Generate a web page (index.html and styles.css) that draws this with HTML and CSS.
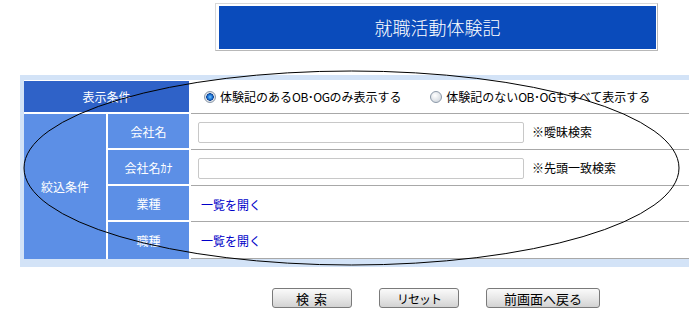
FILE: index.html
```html
<!DOCTYPE html>
<html lang="ja">
<head>
  <meta charset="UTF-8">
  <title>就職活動体験記</title>
  <link rel="stylesheet" href="styles.css">
</head>
<body>
  <div class="page-title">
    <h1>就職活動体験記</h1>
  </div>

  <div class="search-panel">
    <table class="search-table">
      <tr class="row-head">
        <th class="label label-dark" colspan="2">表示条件</th>
        <td class="field">
          <label class="radio"><input type="radio" name="disp" checked><span>体験記のある<span class="latin">OB･OG</span>のみ表示する</span></label>
          <label class="radio radio-second"><input type="radio" name="disp"><span>体験記のない<span class="latin">OB･OG</span>もすべて表示する</span></label>
        </td>
      </tr>
      <tr>
        <th class="label group" rowspan="4">絞込条件</th>
        <th class="label sub">会社名</th>
        <td class="field">
          <input type="text" class="text-box"><span class="note">※曖昧検索</span>
        </td>
      </tr>
      <tr>
        <th class="label sub">会社名ｶﾅ</th>
        <td class="field">
          <input type="text" class="text-box"><span class="note">※先頭一致検索</span>
        </td>
      </tr>
      <tr>
        <th class="label sub">業種</th>
        <td class="field"><a href="#" class="open-list">一覧を開く</a></td>
      </tr>
      <tr>
        <th class="label sub last">職種</th>
        <td class="field last"><a href="#" class="open-list">一覧を開く</a></td>
      </tr>
    </table>
  </div>

  <div class="buttons">
    <button class="btn btn-search">検 索</button>
    <button class="btn btn-reset">リセット</button>
    <button class="btn btn-back">前画面へ戻る</button>
  </div>

  <!-- hand drawn annotation over the form -->
  <svg class="annotation" width="689" height="326" viewBox="0 0 689 326">
    <ellipse cx="351.5" cy="168" rx="327.5" ry="97" fill="none" stroke="#000" stroke-width="1"/>
  </svg>
</body>
</html>
```

FILE: styles.css
```css
body {
  margin: 0;
  padding: 0;
  width: 689px;
  height: 326px;
  overflow: hidden;
  position: relative;
  background: #fff;
  font-family: "Noto Sans CJK JP", "DejaVu Sans", sans-serif;
  font-size: 12px;
  color: #000;
}

.page-title {
  margin: 3px 0 0 215px;
  width: 437px;
  height: 43px;
  padding: 2px 1px 1px 3px;
  border: 1px solid #d8d8d8;
  border-right-color: #b8b8b8;
  border-bottom-color: #b8b8b8;
  background: #fff;
}

.page-title h1 {
  margin: 0;
  height: 43px;
  background: #0a4bbb;
  color: #fff;
  font-size: 18px;
  font-weight: 300;
  line-height: 43px;
  text-align: center;
}

.search-panel {
  margin: 24px 0 0 20px;
  padding: 5px 0 8px 4px;
  width: 700px;
  background: #d3e3f7;
}

.search-table {
  border-collapse: separate;
  border-spacing: 0;
  width: 720px;
  background: #fff;
}

.label {
  color: #fff;
  font-weight: normal;
  text-align: center;
  background: #5c8fe6;
  border-right: 2px solid #fff;
  border-bottom: 2px solid #fff;
  padding: 0;
}

.label-dark {
  background: #2f62c8;
  height: 31px;
  border-top: 1px solid #fff;
  border-bottom: 2px solid #fff;
}

.group {
  width: 82px;
  border-bottom: none;
}

.sub {
  width: 81px;
  height: 34px;
}

.sub.last {
  height: 37px;
  border-bottom: none;
}

.field {
  padding: 0 0 0 7px;
  border-bottom: 1px solid #a8a8a8;
  border-top: 1px solid #fff;
}

.row-head .field {
  border-top: 1px solid #fff;
  padding-left: 13px;
}

.field.last {
  border-bottom: 1px solid #a8a8a8;
}

.radio {
  display: inline-flex;
  align-items: center;
  gap: 4px;
  white-space: nowrap;
}

.radio .latin {
  letter-spacing: -0.5px;
}

.radio-second {
  margin-left: 26px;
}

.radio input {
  appearance: none;
  margin: 0;
  width: 12px;
  height: 12px;
  border-radius: 50%;
  border: 1px solid #8b98a8;
  background: radial-gradient(circle at 40% 35%, #ffffff, #d8dde3 70%);
}

.radio input:checked {
  background: radial-gradient(circle, #6fc4ff 0, #1a6fd0 2.5px, #0b3f8f 3.5px, #e6eaee 4px, #c9d0d8 100%);
}

.text-box {
  width: 320px;
  height: 17px;
  margin: 0 8px 0 0;
  padding: 1px 2px;
  border: 1px solid #c8c8c8;
  border-radius: 2px;
  vertical-align: middle;
  font-size: 12px;
}

.note {
  vertical-align: middle;
}

.open-list {
  color: #0000c8;
  text-decoration: none;
  margin-left: 3px;
}

.buttons {
  display: flex;
  gap: 27px;
  margin: 21px 0 0 272px;
}

.btn {
  height: 20px;
  padding: 0;
  border: 1px solid #7a7a7a;
  border-radius: 3px;
  background: linear-gradient(#fafafa, #e6e6e6 55%, #d2d2d2);
  font-family: inherit;
  font-size: 13px;
  line-height: 17px;
  color: #000;
}

.btn-search {
  width: 80px;
  letter-spacing: 1px;
}

.btn-reset {
  width: 80px;
  font-size: 12px;
  letter-spacing: -1px;
}

.btn-back {
  width: 114px;
}

.annotation {
  position: absolute;
  left: 0;
  top: 0;
  pointer-events: none;
}
```
